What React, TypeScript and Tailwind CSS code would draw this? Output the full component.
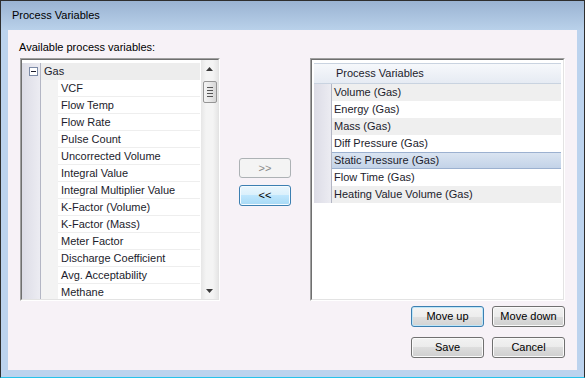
import React from 'react';

const FONT = { fontFamily: '"Liberation Sans", Arial, sans-serif' };

const available = [
  'VCF',
  'Flow Temp',
  'Flow Rate',
  'Pulse Count',
  'Uncorrected Volume',
  'Integral Value',
  'Integral Multiplier Value',
  'K-Factor (Volume)',
  'K-Factor (Mass)',
  'Meter Factor',
  'Discharge Coefficient',
  'Avg. Acceptability',
  'Methane',
];

const selected = [
  'Volume (Gas)',
  'Energy (Gas)',
  'Mass (Gas)',
  'Diff Pressure (Gas)',
  'Static Pressure (Gas)',
  'Flow Time (Gas)',
  'Heating Value Volume (Gas)',
];

function WinButton({ label, focused }: { label: string; focused?: boolean }) {
  return (
    <button
      className={
        focused
          ? 'h-[21px] w-[73px] rounded-[3px] border border-[#3c7fb1] bg-[linear-gradient(#f4f4f4_0%,#ededed_50%,#e0e0e0_50%,#d3d3d3_100%)] text-[11px] text-black shadow-[inset_0_0_0_1px_#bfe6f8]'
          : 'h-[21px] w-[73px] rounded-[3px] border border-[#707070] bg-[linear-gradient(#f2f2f2_0%,#ebebeb_50%,#dddddd_50%,#cfcfcf_100%)] text-[11px] text-black shadow-[inset_0_0_0_1px_#fafafa]'
      }
    >
      {label}
    </button>
  );
}

function Sunken({ children, className }: { children: React.ReactNode; className: string }) {
  return (
    <div className={`border border-t-[#a0a0a0] border-l-[#a0a0a0] border-b-white border-r-white ${className}`}>
      <div className="h-full w-full border border-t-[#6f6f6f] border-l-[#6f6f6f] border-b-[#e3e3e3] border-r-[#e3e3e3] bg-white">
        {children}
      </div>
    </div>
  );
}

function Scrollbar() {
  return (
    <div className="flex h-full w-[17px] flex-col items-center bg-[linear-gradient(90deg,#e6e6e6,#f4f4f4_30%,#f4f4f4_70%,#e6e6e6)]">
      <div className="flex h-[18px] w-full items-center justify-center">
        <svg width="7" height="4" viewBox="0 0 7 4">
          <path d="M3.5 0 L7 4 L0 4 Z" fill="#3a3a3a" />
        </svg>
      </div>
      <div className="mt-[3px] flex h-[22px] w-[14px] flex-col items-center justify-center gap-[2px] rounded-[2px] border border-[#959595] bg-[linear-gradient(90deg,#f3f3f3,#e8e8e8_50%,#d6d6d6)]">
        <div className="h-px w-[6px] bg-[#555]" />
        <div className="h-px w-[6px] bg-[#555]" />
        <div className="h-px w-[6px] bg-[#555]" />
        <div className="h-px w-[6px] bg-[#555]" />
      </div>
      <div className="flex-1" />
      <div className="flex h-[17px] w-full items-center justify-center">
        <svg width="7" height="4" viewBox="0 0 7 4">
          <path d="M0 0 L7 0 L3.5 4 Z" fill="#3a3a3a" />
        </svg>
      </div>
    </div>
  );
}

function AvailableList() {
  return (
    <Sunken className="h-[243px] w-[201px]">
      <div className="flex h-full overflow-hidden">
        <div className="flex-1 overflow-hidden pt-[3px]">
          <div className="flex h-[17px]">
            <div className="flex w-[18px] items-center justify-end bg-[linear-gradient(90deg,#dcdce6,#ececf2)] pr-[2px]">
              <div className="flex h-[9px] w-[9px] items-center justify-center border border-[#7c8aa6] bg-white">
                <div className="h-px w-[5px] bg-[#1c1c2c]" />
              </div>
            </div>
            <div className="w-px bg-[#b3b6c4]" />
            <div className="flex flex-1 items-center bg-[#ededed] pl-[3px] text-[11px] text-[#1c1c2c]">Gas</div>
          </div>
          {available.map((name) => (
            <div key={name} className="flex h-[17px]">
              <div className="w-[18px] bg-[linear-gradient(90deg,#dcdce6,#ececf2)]" />
              <div className="w-px bg-[#b3b6c4]" />
              <div className="w-[17px] bg-[#f3f3f3]" />
              <div className="flex flex-1 items-center border-b border-[#eeeeee] bg-white pl-[3px] text-[11px] text-[#1c1c2c]">
                {name}
              </div>
            </div>
          ))}
        </div>
        <div className="pl-[1px]">
          <Scrollbar />
        </div>
      </div>
    </Sunken>
  );
}

function SelectedList() {
  return (
    <Sunken className="h-[243px] w-[255px]">
      <div className="px-[2px] pt-[3px]">
        <div className="flex h-[21px] items-center border-y border-[#c9d3e0] bg-[linear-gradient(#f6f8fb,#e6ebf3)] pl-[22px] text-[11px] text-[#1c1c2c]">
          Process Variables
        </div>
        {selected.map((name, i) => {
          const isSel = name === 'Static Pressure (Gas)';
          return (
            <div key={name} className="flex h-[17px]">
              <div className="w-[17px] bg-[linear-gradient(90deg,#dcdce6,#ececf2)]" />
              <div className="w-px bg-[#b3b6c4]" />
              <div
                className={
                  isSel
                    ? 'flex flex-1 items-center border-y border-[#9cb1d0] bg-[linear-gradient(#dae4f1,#c3d3e8)] pl-[2px] text-[11px] text-[#1c1c2c]'
                    : i % 2 === 0
                      ? 'flex flex-1 items-center bg-[#efefef] pl-[2px] text-[11px] text-[#1c1c2c]'
                      : 'flex flex-1 items-center bg-white pl-[2px] text-[11px] text-[#1c1c2c]'
                }
              >
                {name}
              </div>
            </div>
          );
        })}
      </div>
    </Sunken>
  );
}

export default function App() {
  return (
    <div style={FONT} className="flex h-[378px] w-[585px] flex-col border border-[#2e2e2e] border-b-[#27c2ea] bg-[#bcd3ee]">
      {/* Title bar */}
      <div className="flex h-[29px] shrink-0 items-center bg-[linear-gradient(#9ab3d2,#b9d1ea)] pl-[11px] text-[11px] text-black">
        Process Variables
      </div>

      {/* Dialog body */}
      <div className="mx-[7px] flex h-[340px] shrink-0 flex-col bg-[#f7f2f7] pl-[12px] pr-[12px] pt-[10px]">
        <div className="-ml-px h-[15px] text-[11px] leading-[15px] text-black">Available process variables:</div>

        <div className="mt-[3px] flex">
          <AvailableList />
          <div className="ml-[19px] flex w-[52px] flex-col gap-[7px] pt-[100px]">
            <button className="h-[20px] w-[52px] rounded-[3px] border border-[#adb2b5] bg-[#f4f4f4] text-[11px] text-[#8a8a8a]">
              &gt;&gt;
            </button>
            <button className="h-[21px] w-[52px] rounded-[3px] border border-[#3c7fb1] bg-[linear-gradient(#eaf6fd_0%,#d9f0fc_50%,#bee6fd_50%,#a7d9f5_100%)] text-[11px] text-black shadow-[inset_0_0_0_1px_#f4fbff]">
              &lt;&lt;
            </button>
          </div>
          <div className="ml-[19px]">
            <SelectedList />
          </div>
        </div>

        <div className="mt-[5px] flex justify-end gap-[8px]">
          <WinButton label="Move up" focused />
          <WinButton label="Move down" />
        </div>
        <div className="mt-[10px] flex justify-end gap-[8px]">
          <WinButton label="Save" />
          <WinButton label="Cancel" />
        </div>
      </div>
    </div>
  );
}
